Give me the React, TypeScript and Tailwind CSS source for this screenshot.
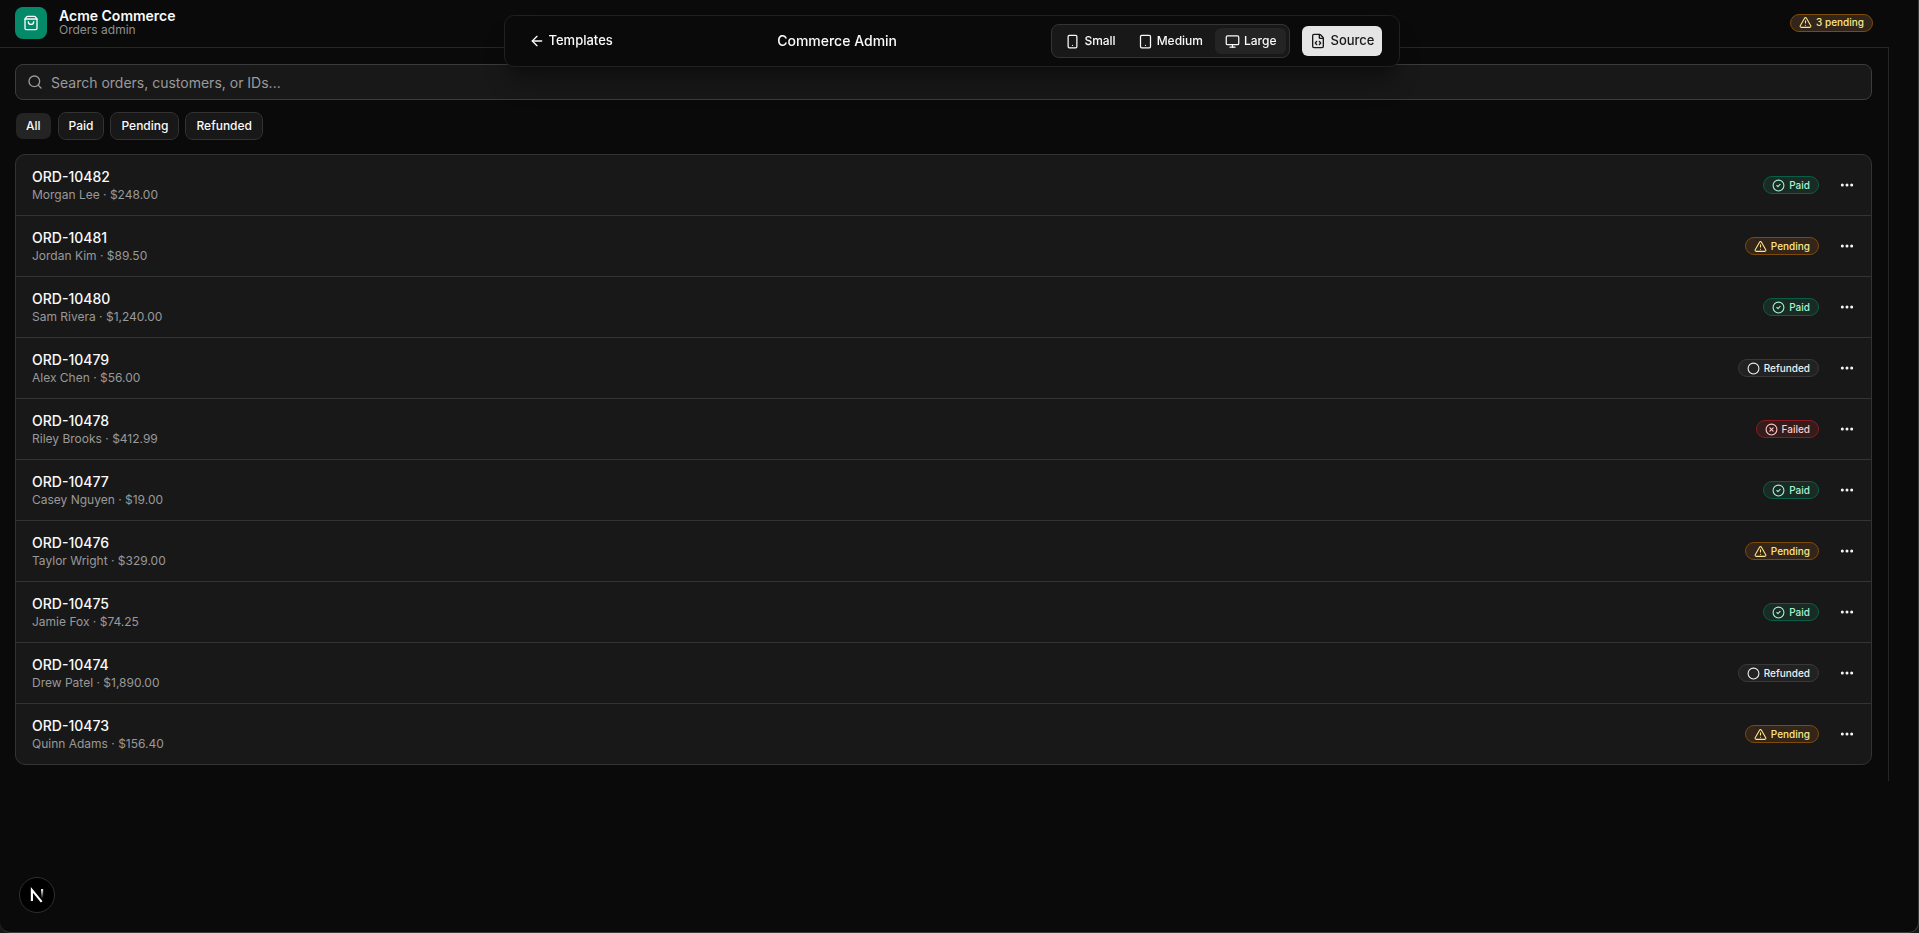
import {
  ArrowLeft,
  Circle,
  CircleCheck,
  CircleX,
  Ellipsis,
  FileCode,
  Monitor,
  Search,
  ShoppingBag,
  Smartphone,
  Tablet,
  TriangleAlert,
} from "lucide-react"

type Status = "Paid" | "Pending" | "Refunded" | "Failed"

const orders: { id: string; customer: string; total: string; status: Status }[] = [
  { id: "ORD-10482", customer: "Morgan Lee", total: "$248.00", status: "Paid" },
  { id: "ORD-10481", customer: "Jordan Kim", total: "$89.50", status: "Pending" },
  { id: "ORD-10480", customer: "Sam Rivera", total: "$1,240.00", status: "Paid" },
  { id: "ORD-10479", customer: "Alex Chen", total: "$56.00", status: "Refunded" },
  { id: "ORD-10478", customer: "Riley Brooks", total: "$412.99", status: "Failed" },
  { id: "ORD-10477", customer: "Casey Nguyen", total: "$19.00", status: "Paid" },
  { id: "ORD-10476", customer: "Taylor Wright", total: "$329.00", status: "Pending" },
  { id: "ORD-10475", customer: "Jamie Fox", total: "$74.25", status: "Paid" },
  { id: "ORD-10474", customer: "Drew Patel", total: "$1,890.00", status: "Refunded" },
  { id: "ORD-10473", customer: "Quinn Adams", total: "$156.40", status: "Pending" },
]

const badgeStyles = {
  Paid: { icon: CircleCheck, className: "border-[#065f46] bg-[#1a2b25] text-[#a7f3d0]" },
  Pending: { icon: TriangleAlert, className: "border-[#7d4a08] bg-[#33251a] text-[#fde58a]" },
  Refunded: { icon: Circle, className: "border-[#383838] bg-[#222222] text-[#f0f0f0]" },
  Failed: { icon: CircleX, className: "border-[#8b1a1f] bg-[#351c1c] text-[#fecaca]" },
}

function Badge({ status, label }: { status: Status; label?: string }) {
  const { icon: Icon, className } = badgeStyles[status]
  return (
    <span className={`flex h-[18px] items-center gap-1 rounded-full border px-2 text-[10px] font-medium ${className}`}>
      <Icon className="size-[13px]" />
      {label ?? status}
    </span>
  )
}

function Toolbar() {
  const sizes = [
    { label: "Small", icon: Smartphone },
    { label: "Medium", icon: Tablet },
    { label: "Large", icon: Monitor },
  ]
  return (
    <div className="fixed left-1/2 top-[15px] z-10 flex h-[52px] w-[896px] max-w-full -translate-x-[456px] items-center justify-between rounded-[10px] border border-[#202020] bg-[#0a0a0a] pl-6 pr-4 shadow-xl shadow-black/30">
      <a href="#templates" className="flex items-center gap-1 pr-2.5 text-[13px] font-medium">
        <ArrowLeft className="size-4" />
        Templates
      </a>
      <h1 className="text-sm font-medium">Commerce Admin</h1>
      <div className="flex items-center gap-3">
        <div className="flex h-[34px] items-center gap-0.5 rounded-lg border border-[#343434] bg-[#181818] px-[3px]">
          {sizes.map(({ label, icon: Icon }) => (
            <button
              key={label}
              className={`flex h-[26px] items-center gap-1 rounded-md px-2.5 text-xs font-medium ${label === "Large" ? "bg-[#242424]" : ""}`}
            >
              <Icon className="size-[15px]" />
              {label}
            </button>
          ))}
        </div>
        <button className="flex h-[30px] items-center gap-1 rounded-md bg-[#e5e5e5] px-2 text-[13px] font-medium text-[#171717]">
          <FileCode className="size-4" />
          Source
        </button>
      </div>
    </div>
  )
}

export default function App() {
  return (
    <div className="bg-[#1a1614] font-['Inter',sans-serif] text-[#fafafa]">
      <Toolbar />
      <div className="min-h-screen rounded-b-[10px] border-b border-r border-[#3a3a3a] bg-[#0a0a0a]">
        <div className="mr-[29px]">
          <header className="flex h-12 items-center justify-between border-b border-[#262626] pb-[2px] pl-[15px] pr-4">
            <div className="flex items-center gap-3">
              <div className="flex size-8 items-center justify-center rounded-lg bg-[#058a69]">
                <ShoppingBag className="size-4" />
              </div>
              <div>
                <p className="text-sm font-semibold leading-[15px]">Acme Commerce</p>
                <p className="text-xs leading-[14px] text-[#8f8f8f]">Orders admin</p>
              </div>
            </div>
            <Badge status="Pending" label="3 pending" />
          </header>

          <main className="border-r border-[#262626] py-4 pl-[15px] pr-4">
            <label className="flex h-9 items-center gap-2 rounded-lg border border-[#3c3c3c] bg-[#181818] px-[11px]">
              <Search className="size-4 text-[#9a9a9a]" />
              <input
                type="text"
                aria-label="Search orders"
                placeholder="Search orders, customers, or IDs..."
                className="flex-1 bg-transparent pt-0.5 text-sm outline-none placeholder:text-[#9a9a9a]"
              />
            </label>

            <div className="mt-3 flex gap-1.5">
              {["All", "Paid", "Pending", "Refunded"].map((filter) => (
                <button
                  key={filter}
                  className={`h-7 rounded-lg border bg-clip-padding px-2.5 text-xs font-medium ${filter === "All" ? "border-transparent bg-[#242424]" : "border-[#333333] bg-[#181818]"}`}
                >
                  {filter}
                </button>
              ))}
            </div>

            <ul className="mt-3.5 divide-y divide-[#333333] rounded-[10px] border border-[#333333] bg-[#181818]">
              {orders.map((order) => (
                <li key={order.id} className="flex h-[61px] items-center justify-between pl-4 pr-3 last:h-[60px]">
                  <div>
                    <p className="text-sm font-medium leading-[18px]">{order.id}</p>
                    <p className="text-xs leading-[17px] text-[#999999]">
                      {order.customer} · {order.total}
                    </p>
                  </div>
                  <div className="flex items-center gap-4">
                    <Badge status={order.status} />
                    <button aria-label={`Actions for ${order.id}`} className="flex size-6 items-center justify-center">
                      <Ellipsis className="size-4" strokeWidth={2.5} />
                    </button>
                  </div>
                </li>
              ))}
            </ul>
          </main>
        </div>
      </div>

      <button
        aria-label="Open dev tools"
        className="fixed bottom-5 left-[19px] flex size-9 items-center justify-center rounded-full border border-[#303030] bg-black"
      >
        <svg viewBox="0 0 40 40" className="size-9" fill="none">
          <defs>
            <linearGradient id="stem" x1="0" y1="13" x2="0" y2="24" gradientUnits="userSpaceOnUse">
              <stop stopColor="white" />
              <stop offset="1" stopColor="white" stopOpacity="0" />
            </linearGradient>
          </defs>
          <path d="M14 27V14L25.5 28" stroke="white" strokeWidth="2.5" />
          <path d="M26 13V24" stroke="url(#stem)" strokeWidth="2.5" />
        </svg>
      </button>
    </div>
  )
}
